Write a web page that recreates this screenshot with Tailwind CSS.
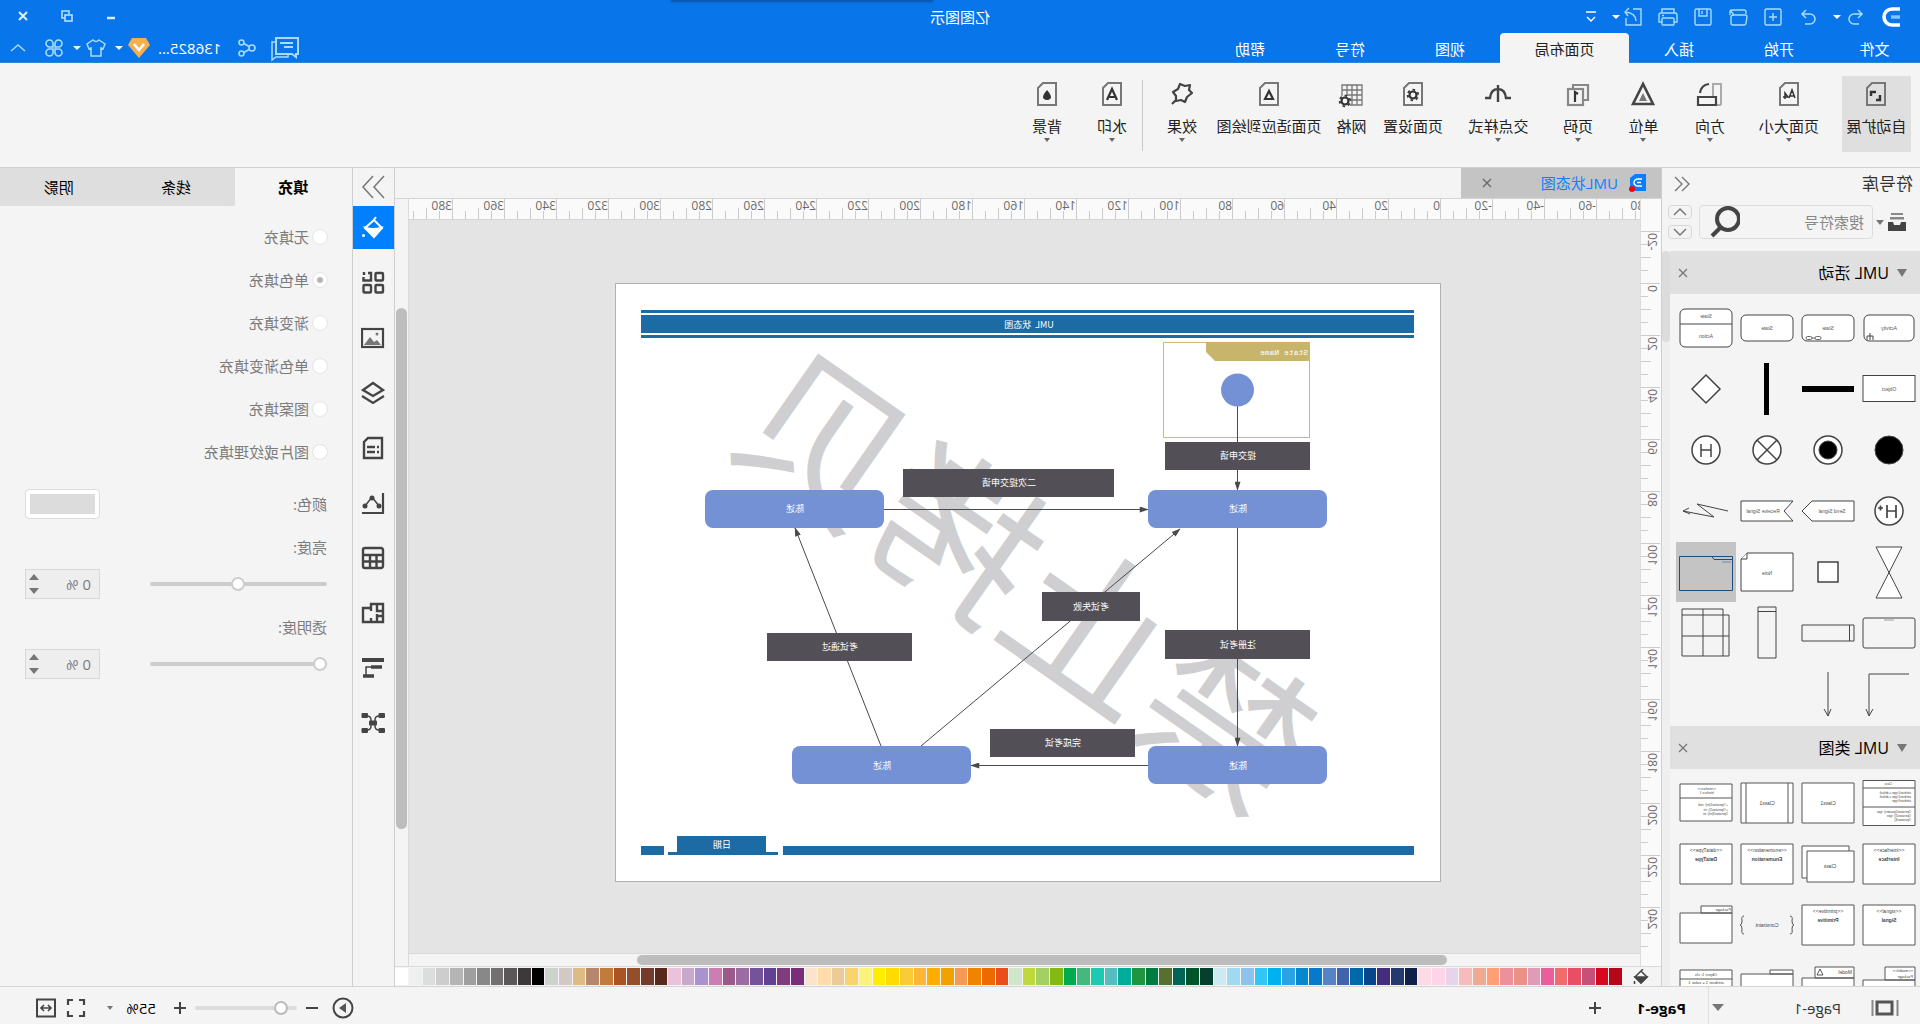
<!DOCTYPE html>
<html lang="zh-CN">
<head>
<meta charset="utf-8">
<title>亿图图示</title>
<script src="https://cdn.jsdelivr.net/npm/@tailwindcss/browser@4"></script>
</head>
<body class="overflow-hidden bg-[#f4f4f4]">
<div class="flex h-screen flex-col -scale-x-100 overflow-hidden bg-[#f4f4f4] font-['Open_Sans','Noto_Sans_CJK_SC',sans-serif] text-[15px] leading-5 text-[#333]">

<!-- Title bar -->
<header class="relative bg-[#0876ea] text-white">
  <div class="absolute top-0 left-[51.4%] h-[2px] w-[262px] bg-[#0a56a8]/80 shadow-[0_0_3px_#0a56a8]"></div>
  <div class="grid h-[33px] grid-cols-[1fr_auto_1fr] items-center">
    <div class="flex items-center pl-4 text-[#a8dcff]">
      <svg class="h-6 w-[26px]" viewBox="0 0 26 24" fill="none"><path d="M4 3.800h9q-8 2-8 8.200t8 8.200h9M22 3.800H12M12 20.200h9" stroke="none"/><path d="M4 4h8a8 8 0 0 1 0 16H4" stroke="#fff" stroke-width="3.600"/><path d="M4 12h9" stroke="#7cc8ff" stroke-width="3.400"/></svg>
      <button aria-label="撤销" class="ml-3 h-5 w-5"><svg viewBox="0 0 20 20" fill="none" stroke="currentColor" stroke-width="1.500"><path d="M8 3 4 7l4 4M4 7h8a5 5 0 0 1 0 10H7"/></svg></button>
      <button aria-label="撤销列表" class="ml-1 w-[10px]"><svg class="h-[10px]" viewBox="0 0 10 10" fill="#fff"><path d="M1 3h8L5 7z"/></svg></button>
      <div class="ml-[14px] flex gap-[15px]">
        <button aria-label="恢复" class="h-5 w-5"><svg viewBox="0 0 20 20" fill="none" stroke="currentColor" stroke-width="1.500"><path d="m12 3 4 4-4 4M16 7H8a5 5 0 0 0 0 10h5"/></svg></button>
        <button aria-label="新建" class="h-5 w-5"><svg viewBox="0 0 20 20" fill="none" stroke="currentColor" stroke-width="1.400"><rect x="2" y="2" width="16" height="16" rx="1.500"/><path d="M10 6v8M6 10h8"/></svg></button>
        <button aria-label="打开" class="h-5 w-5"><svg viewBox="0 0 20 20" fill="none" stroke="currentColor" stroke-width="1.400"><path d="M2 7V5q0-2 2-2h12q2 0 2 2v3M4 18q-2 0-2-2l-1-6q0-2 2-2h11l4-5M14 8q3 0 3 2v6q0 2-2 2H4" /></svg></button>
        <button aria-label="保存" class="h-5 w-5"><svg viewBox="0 0 20 20" fill="none" stroke="currentColor" stroke-width="1.400"><rect x="2" y="2" width="16" height="16" rx="1.500"/><path d="M6 2v7h8V2M11 4v3"/></svg></button>
        <button aria-label="打印" class="h-5 w-5"><svg viewBox="0 0 20 20" fill="none" stroke="currentColor" stroke-width="1.400"><path d="M4 6V2h12v4M4 15H1V8q0-2 2-2h14q2 0 2 2v7h-3"/><rect x="4" y="11" width="12" height="7" rx="1"/><path d="M14 8.500h2"/></svg></button>
        <button aria-label="导出" class="h-5 w-5"><svg viewBox="0 0 20 20" fill="none" stroke="currentColor" stroke-width="1.400"><path d="M10 2H2v16h15v-7M7 14q0-8 11-9M14 1l4 4-3 4"/></svg></button>
      </div>
      <button aria-label="导出列表" class="ml-[2px] w-[10px]"><svg class="h-[10px]" viewBox="0 0 10 10" fill="#fff"><path d="M1 3h8L5 7z"/></svg></button>
      <button aria-label="更多" class="ml-[10px] h-5 w-5"><svg viewBox="0 0 20 20" fill="none" stroke="#fff" stroke-width="1.400"><path d="M5 5h10M6 10l4 4 4-4"/></svg></button>
    </div>
    <h1>亿图图示</h1>
    <div class="flex justify-end gap-6 pr-[13px]">
      <button aria-label="最小化" class="h-5 w-5"><svg viewBox="0 0 20 20" stroke="#d6eeff" stroke-width="2.500"><path d="M6 11h8"/></svg></button>
      <button aria-label="还原" class="h-5 w-5"><svg viewBox="0 0 20 20" fill="none" stroke="#b4e0ff" stroke-width="1.600"><rect x="5" y="8" width="7" height="6"/><path d="M8 7V4h7v7h-3"/></svg></button>
      <button aria-label="关闭" class="h-5 w-5"><svg viewBox="0 0 20 20" stroke="#d6eeff" stroke-width="2.200"><path d="m6 5 8 8M14 5l-8 8"/></svg></button>
    </div>
  </div>
  <div class="flex h-[30px] items-stretch border-b border-[#2a86d8]">
    <nav class="flex items-stretch [&>a]:pt-[2px]">
      <a href="#" class="flex w-[91px] items-center justify-center">文件</a>
      <a href="#" class="flex w-[100px] items-center justify-center">开始</a>
      <a href="#" class="flex w-[100px] items-center justify-center">插入</a>
      <a href="#" class="-mb-px flex w-[129px] items-center justify-center rounded-t-sm bg-[#f4f4f4] text-[#222]">页面布局</a>
      <a href="#" class="flex w-[100px] items-center justify-center">视图</a>
      <a href="#" class="flex w-[100px] items-center justify-center">符号</a>
      <a href="#" class="flex w-[100px] items-center justify-center">帮助</a>
    </nav>
    <div class="ml-auto flex items-center pr-2 text-[#a8dcff]">
      <button aria-label="消息" class="h-7 w-7"><svg viewBox="0 0 28 28" fill="none" stroke="currentColor" stroke-width="2"><path d="M1 4h22v16H7l-4 3v-3H1z"/><path d="M6 9h13M6 13h9"/><path d="M23 8h4v18l-4-3H11v-3" stroke-width="1.500"/></svg></button>
      <button aria-label="分享" class="ml-[14px] h-5 w-5"><svg viewBox="0 0 20 20" fill="none" stroke="currentColor" stroke-width="1.600"><circle cx="5" cy="10" r="3"/><circle cx="15.500" cy="4.500" r="2.500"/><circle cx="15.500" cy="15.500" r="2.500"/><path d="m8 8.500 5-3M8 11.500l5 3"/></svg></button>
      <span class="ml-4 text-[15px] text-white">136825...</span>
      <svg class="ml-2 h-[22px] w-[22px]" viewBox="0 0 22 22"><path d="M4 1h14l4 7-11 13L0 8z" fill="#f5b04d"/><path d="m6 7 5 6 5-6" fill="none" stroke="#fff" stroke-width="2.600"/></svg>
      <svg class="ml-1 h-[10px] w-[10px]" viewBox="0 0 10 10" fill="#fff"><path d="M1 3h8L5 7z"/></svg>
      <button aria-label="主题" class="ml-2 h-5 w-5"><svg viewBox="0 0 20 20" fill="none" stroke="currentColor" stroke-width="1.500"><path d="M7 2 1 6l2 5 2-1v8h10v-8l2 1 2-5-6-4q-3 3-6 0z"/></svg></button>
      <svg class="ml-1 h-[10px] w-[10px]" viewBox="0 0 10 10" fill="#fff"><path d="M1 3h8L5 7z"/></svg>
      <button aria-label="应用" class="ml-2 h-5 w-5"><svg viewBox="0 0 20 20" fill="none" stroke="currentColor" stroke-width="1.600"><path d="M9 9H5.500A3.500 3.500 0 1 1 9 5.500zM11 9h3.500A3.500 3.500 0 1 0 11 5.500zM9 11H5.500A3.500 3.500 0 1 0 9 14.500zM11 11h3.500a3.500 3.500 0 1 1-3.500 3.500z"/></svg></button>
      <button aria-label="折叠功能区" class="ml-4 h-5 w-5"><svg viewBox="0 0 20 20" fill="none" stroke="currentColor" stroke-width="1.500"><path d="m3 13 7-6 7 6"/></svg></button>
    </div>
  </div>
</header>

<!-- Ribbon -->
<section class="flex h-[105px] items-start border-b border-[#d0d0d0] pt-[13px] text-[#222] [&>button]:gap-2">
  <button class="ml-[9px] flex h-[76px] w-[69px] flex-col items-center bg-[#dfdfdf] pt-1"><svg class="h-7 w-7" viewBox="0 0 28 28" fill="none" stroke="#777" stroke-width="2"><path d="M5 3h13l5 5v17H5z"/><path d="M10 15v5h4M14 12h5v4" stroke="#333" stroke-width="2.400"/></svg><span class="whitespace-nowrap">自动扩展</span></button>
  <button class="ml-2 flex h-[76px] w-[90px] flex-col items-center pt-1"><svg class="h-7 w-7" viewBox="0 0 28 28" fill="none" stroke="#777" stroke-width="2"><path d="M5 3h13l5 5v17H5z"/><path d="m8 18 3-8 3 8M9 16h4M18 19v-6l-3 4h5" stroke="#333" stroke-width="1.500"/></svg><span class="whitespace-nowrap">页面大小</span><svg class="-mt-2 h-2 w-2" viewBox="0 0 8 8" fill="#666"><path d="M1 2h6L4 6z"/></svg></button>
  <button class="flex h-[76px] w-[68px] flex-col items-center pt-1"><svg class="h-7 w-7" viewBox="0 0 28 28" fill="none" stroke="#aaa" stroke-width="2"><path d="M3 25V4h8v13"/><path d="M3 25h4"/><path d="M8 17h18v8H8zM15 4q8 1 9 9" stroke="#444" stroke-width="2.200"/></svg><span class="whitespace-nowrap">方向</span><svg class="-mt-2 h-2 w-2" viewBox="0 0 8 8" fill="#666"><path d="M1 2h6L4 6z"/></svg></button>
  <button class="flex h-[76px] w-[65px] flex-col items-center pt-1"><svg class="h-7 w-7" viewBox="0 0 28 28"><path d="M14 4 24 24H4z" fill="none" stroke="#444" stroke-width="2.600"/><path d="m14 13 4 8h-8z" fill="#777"/></svg><span class="whitespace-nowrap">单位</span><svg class="-mt-2 h-2 w-2" viewBox="0 0 8 8" fill="#666"><path d="M1 2h6L4 6z"/></svg></button>
  <button class="flex h-[76px] w-[66px] flex-col items-center pt-1"><svg class="h-7 w-7" viewBox="0 0 28 28" fill="none" stroke="#888" stroke-width="2.200"><path d="M8 19H4V9q0-1 1-1h1V5h13v3" stroke="none"/><path d="M8 20H4V5h15v4"/><rect x="9" y="9" width="15" height="16"/><path d="m14 14 3-2v10" stroke="#333"/></svg><span class="whitespace-nowrap">页码</span><svg class="-mt-2 h-2 w-2" viewBox="0 0 8 8" fill="#666"><path d="M1 2h6L4 6z"/></svg></button>
  <button class="flex h-[76px] w-[93px] flex-col items-center pt-1"><svg class="h-7 w-7" viewBox="0 0 28 28" fill="none" stroke="#444" stroke-width="2.400"><path d="M1 18h5q1-9 8-9t8 9h5M14 5v17"/></svg><span class="whitespace-nowrap">交点样式</span><svg class="-mt-2 h-2 w-2" viewBox="0 0 8 8" fill="#666"><path d="M1 2h6L4 6z"/></svg></button>
  <button class="flex h-[76px] w-[78px] flex-col items-center pt-1"><svg class="h-7 w-7" viewBox="0 0 28 28" fill="none" stroke="#777" stroke-width="2"><path d="M5 3h13l5 5v17H5z"/><circle cx="14" cy="15" r="3.500" stroke="#333" stroke-width="2.200"/><circle cx="14" cy="15" r="5.300" stroke="#333" stroke-width="1.800" stroke-dasharray="2.600 2.950"/></svg><span class="whitespace-nowrap">页面设置</span></button>
  <button class="flex h-[76px] w-[45px] flex-col items-center pt-1"><svg class="h-7 w-7" viewBox="0 0 28 28" fill="none" stroke="#777" stroke-width="1.300"><path d="M15 25H3V5h20v11M3 10h20M3 15h16M3 20h12M8 5v20M13 5v20M18 5v11"/><circle cx="20" cy="21" r="3.500" stroke="#333" stroke-width="2.200"/><circle cx="20" cy="21" r="5.300" stroke="#333" stroke-width="1.800" stroke-dasharray="2.600 2.950"/></svg><span class="whitespace-nowrap">网格</span></button>
  <button class="flex h-[76px] w-[120px] flex-col items-center pt-1"><svg class="h-7 w-7" viewBox="0 0 28 28" fill="none" stroke="#777" stroke-width="2"><path d="M5 3h13l5 5v17H5z"/><path d="m14 11 4 8h-8z" stroke="#333" stroke-width="2.200"/></svg><span class="whitespace-nowrap">页面适应到绘图</span></button>
  <button class="flex h-[76px] w-[54px] flex-col items-center pt-1"><svg class="h-7 w-7" viewBox="0 0 28 28" fill="none" stroke="#444" stroke-width="2.200" stroke-linejoin="round"><path d="m6 5 5 1 5-2 2 5 5 3-3 4v5l-5-1-4 2-2-5-5-4 3-3zM20 20l4 4"/></svg><span class="whitespace-nowrap">效果</span><svg class="-mt-2 h-2 w-2" viewBox="0 0 8 8" fill="#666"><path d="M1 2h6L4 6z"/></svg></button>
  <div class="mt-1 ml-3 h-[71px] w-px bg-[#c8c8c8]"></div>
  <button class="flex h-[76px] w-[60px] flex-col items-center pt-1"><svg class="h-7 w-7" viewBox="0 0 28 28" fill="none" stroke="#777" stroke-width="2"><path d="M5 3h13l5 5v17H5z"/><path d="m9 20 5-11 5 11M11 17h6" stroke="#333" stroke-width="2.200"/></svg><span class="whitespace-nowrap">水印</span><svg class="-mt-2 h-2 w-2" viewBox="0 0 8 8" fill="#666"><path d="M1 2h6L4 6z"/></svg></button>
  <button class="flex h-[76px] w-[70px] flex-col items-center pt-1"><svg class="h-7 w-7" viewBox="0 0 28 28" fill="none" stroke="#777" stroke-width="2"><path d="M5 3h13l5 5v17H5z"/><path d="M14 10q8 9 0 10-8-1 0-10z" fill="#333" stroke="none"/></svg><span class="whitespace-nowrap">背景</span><svg class="-mt-2 h-2 w-2" viewBox="0 0 8 8" fill="#666"><path d="M1 2h6L4 6z"/></svg></button>
</section>

<main class="flex min-h-0 flex-1">

<!-- Symbol library -->
<aside class="flex w-[259px] shrink-0 flex-col border-r border-[#cfcfcf]">
  <div class="flex h-8 shrink-0 items-center justify-between pr-3 pl-[7px]">
    <h2 class="text-[17px]">符号库</h2>
    <button aria-label="收起" class="h-4 w-4"><svg viewBox="0 0 16 16" fill="none" stroke="#777" stroke-width="1.400"><path d="M8 1 1 8l7 7M15 1 8 8l7 7"/></svg></button>
  </div>
  <div class="mt-[5px] flex h-[34px] shrink-0 items-center pl-[14px]">
    <button aria-label="符号库菜单" class="flex w-[33px] items-center gap-1"><svg class="h-5 w-[18px]" viewBox="0 0 18 20" fill="#444"><path d="M3 1h12v2H3zM2 5h14v2.500H2z" fill="#888"/><path d="M0 10h5l1 3h6l1-3h5v9H0z"/></svg><svg class="h-2 w-2" viewBox="0 0 8 8" fill="#777"><path d="M0 2h8L4 7z"/></svg></button>
    <div class="flex h-full w-[174px] items-center rounded-sm border border-[#dcdcdc]">
      <input aria-label="搜索符号" placeholder="搜索符号" class="w-[124px] bg-transparent pl-2 text-[15px] placeholder:text-[#888]">
      <button aria-label="搜索" class="ml-2 h-8 w-8"><svg viewBox="0 0 32 32" fill="none" stroke="#444"><circle cx="12" cy="13" r="11" stroke-width="4"/><path d="m19 21 9 9" stroke-width="4"/></svg></button>
    </div>
    <div class="ml-[7px] flex w-6 flex-col gap-[6px]">
      <button aria-label="上一个" class="flex h-[14px] items-center justify-center rounded-sm border border-[#d8d8d8]"><svg class="h-3 w-4" viewBox="0 0 16 12" fill="none" stroke="#777" stroke-width="1.500"><path d="m2 9 6-6 6 6"/></svg></button>
      <button aria-label="下一个" class="flex h-[14px] items-center justify-center rounded-sm border border-[#d8d8d8]"><svg class="h-3 w-4" viewBox="0 0 16 12" fill="none" stroke="#777" stroke-width="1.500"><path d="m2 3 6 6 6-6"/></svg></button>
    </div>
  </div>
  <div class="mt-3 flex min-h-0 flex-1">
    <div class="w-[250px] overflow-hidden">
      <h3 class="flex h-[43px] items-center bg-[#e0e0e0] pr-[7px] pl-[13px] text-[16px] text-black"><svg class="mr-2 h-[10px] w-[10px]" viewBox="0 0 10 10" fill="#777"><path d="M0 1h10L5 9z"/></svg>UML 活动<button aria-label="关闭" class="ml-auto h-3 w-3"><svg viewBox="0 0 12 12" stroke="#777" stroke-width="1.300"><path d="m2 2 8 8M10 2l-8 8"/></svg></button></h3>
      <div class="grid grid-cols-[repeat(4,61px)] auto-rows-[61px] px-px pt-1 pb-px [&>svg]:h-[60px] [&>svg]:w-[60px] fill-white stroke-[#444] font-['Liberation_Sans',sans-serif] text-[5px] [&_text]:fill-[#555] [&_text]:stroke-none">
        <svg viewBox="0 0 60 60" text-anchor="middle"><rect x="5" y="17" width="50" height="26" rx="5"/><text x="30" y="32">Activity</text><path d="M46 42v-4h6v4M49 42v-7" fill="none"/></svg>
        <svg viewBox="0 0 60 60" text-anchor="middle"><rect x="4" y="17" width="52" height="26" rx="5"/><text x="30" y="32">State</text><g fill="none" stroke-width=".8"><rect x="37" y="38.500" width="6" height="3" rx="1.500"/><rect x="46" y="38.500" width="6" height="3" rx="1.500"/><path d="M43 40h3"/></g></svg>
        <svg viewBox="0 0 60 60" text-anchor="middle"><rect x="4" y="17" width="52" height="26" rx="5"/><text x="30" y="32">State</text></svg>
        <svg viewBox="0 0 60 60" text-anchor="middle"><rect x="4" y="11" width="52" height="38" rx="5"/><path d="M4 26h52"/><text x="30" y="20">State</text><text x="30" y="40">Action</text></svg>

        <svg viewBox="0 0 60 60" text-anchor="middle"><rect x="4" y="16.500" width="52" height="26"/><text x="30" y="32">Object</text></svg>
        <svg viewBox="0 0 60 60" class="fill-black stroke-none"><path d="M4 27h52v6H4z"/></svg>
        <svg viewBox="0 0 60 60" class="fill-black stroke-none"><path d="M28 4h5v52h-5z"/></svg>
        <svg viewBox="0 0 60 60"><path d="m30 16 14 14-14 14-14-14z" stroke-width="1.500"/></svg>

        <svg viewBox="0 0 60 60"><circle cx="30" cy="30" r="14" class="fill-black"/></svg>
        <svg viewBox="0 0 60 60"><circle cx="30" cy="30" r="14" stroke-width="1.500"/><circle cx="30" cy="30" r="9" class="fill-black"/></svg>
        <svg viewBox="0 0 60 60"><circle cx="30" cy="30" r="14" stroke-width="1.500"/><path d="m20 20 20 20M40 20 20 40" stroke-width="1.500"/></svg>
        <svg viewBox="0 0 60 60"><circle cx="30" cy="30" r="14" stroke-width="1.500"/><path d="M25 24v13M35 24v13M25 30h10" stroke-width="1.500"/></svg>

        <svg viewBox="0 0 60 60"><circle cx="30" cy="30" r="14" stroke-width="1.500"/><path d="M23 24v13M32 24v13M23 30h9M36 27h5M38.500 24.500v5" stroke-width="1.700"/></svg>
        <svg viewBox="0 0 60 60" text-anchor="middle"><path d="M4 20h42l10 10-10 10H4z"/><text x="26" y="32">Send Signal</text></svg>
        <svg viewBox="0 0 60 60" text-anchor="middle"><path d="M4 20h52v20H4l9-10z"/><text x="34" y="32">Receive Signal</text></svg>
        <svg viewBox="0 0 60 60" class="fill-none"><path d="m8 30 31-7-17 13 31-6M47 27l6 3-7 3"/></svg>

        <svg viewBox="0 0 60 60"><path d="M17 5h26L17 56h26z"/></svg>
        <svg viewBox="0 0 60 60"><path d="M20 20h20v20H20z" stroke-width="1.500"/></svg>
        <svg viewBox="0 0 60 60" text-anchor="middle"><path d="M4 11h46l6 6v32H4z"/><path d="M50 11v6h6"/><text x="30" y="33">Note</text></svg>
        <svg viewBox="0 0 60 60" class="bg-[#c4c4c4] fill-none stroke-[#1d4f7a]"><path d="M3.500 14.500h53v34h-53zM3.500 17.500H22l2-3"/><path d="M5 20h9" stroke-width=".5"/></svg>

        <svg viewBox="0 0 60 60" class="fill-none"><rect x="4" y="15" width="52" height="30" rx="2"/><path d="M25 17h10" stroke-width=".5"/></svg>
        <svg viewBox="0 0 60 60" class="fill-none"><path d="M4 22h52v16H4zM8.500 22v16"/></svg>
        <svg viewBox="0 0 60 60" class="fill-none"><path d="M21 4h18v51H21zM21 8.500h18"/></svg>
        <svg viewBox="0 0 60 60" class="fill-none"><path d="M7 12h6V6h41v47H7zM7 33h47M13 12h41M13 12v41M33 6v47"/></svg>

        <svg viewBox="0 0 60 60" class="fill-none"><path d="M10 10h40v41M46 45l4 7 3-7"/></svg>
        <svg viewBox="0 0 60 60" class="fill-none"><path d="M30 8v44M27 45l3 7 4-7"/></svg>
      </div>
      <h3 class="flex h-[43px] items-center bg-[#e0e0e0] pr-[7px] pl-[13px] text-[16px] text-black"><svg class="mr-2 h-[10px] w-[10px]" viewBox="0 0 10 10" fill="#777"><path d="M0 1h10L5 9z"/></svg>UML 类图<button aria-label="关闭" class="ml-auto h-3 w-3"><svg viewBox="0 0 12 12" stroke="#777" stroke-width="1.300"><path d="m2 2 8 8M10 2l-8 8"/></svg></button></h3>
      <div class="grid grid-cols-[repeat(4,61px)] auto-rows-[61px] px-px pt-1 [&>svg]:h-[60px] [&>svg]:w-[60px] fill-white stroke-[#555] font-['Liberation_Sans',sans-serif] text-[5px] [&_text]:fill-[#444] [&_text]:stroke-none">
        <svg viewBox="0 0 60 60"><path d="M4 7.500h52v45H4zM4 15h52M4 34h52"/><g class="text-[3px]"><text x="27" y="12">Class</text><text x="8" y="21">attribute1:type = default</text><text x="8" y="25">attribute2:type = default</text><text x="8" y="29">attribute3:type</text><text x="8" y="40">Operation1(params): type</text><text x="8" y="44">Operation2(): type</text><text x="8" y="48">Operation3()</text></g></svg>
        <svg viewBox="0 0 60 60" text-anchor="middle"><path d="M4 10h52v40H4z"/><text x="30" y="32">Class1</text></svg>
        <svg viewBox="0 0 60 60" text-anchor="middle"><path d="M4 10h52v40H4zM9 10v40M51 10v40"/><text x="30" y="32">Class1</text></svg>
        <svg viewBox="0 0 60 60"><path d="M4 11h52v37H4zM4 25h52"/><g class="text-[3px]"><text x="20" y="17">&lt;&lt;interface&gt;&gt;</text><text x="22" y="21">Interface 1</text><text x="8" y="33">+ Operation1(int): void</text><text x="8" y="38">+ Operation2(): int</text><text x="8" y="42">Operation3(int): int</text></g></svg>

        <svg viewBox="0 0 60 60" text-anchor="middle"><path d="M4 10h52v40H4z"/><text x="30" y="18">&lt;&lt;interface&gt;&gt;</text><text x="30" y="27" font-weight="700">Interface</text></svg>
        <svg viewBox="0 0 60 60" text-anchor="middle"><path d="M9 12h47v32H9z"/><path d="M4 17h47v31H4z"/><text x="28" y="34">Class</text></svg>
        <svg viewBox="0 0 60 60" text-anchor="middle"><path d="M4 10h52v40H4z"/><text x="30" y="18">&lt;&lt;enumeration&gt;&gt;</text><text x="30" y="27" font-weight="700">Enumeration</text></svg>
        <svg viewBox="0 0 60 60" text-anchor="middle"><path d="M4 10h52v40H4z"/><text x="30" y="18">&lt;&lt;dataType&gt;&gt;</text><text x="30" y="27" font-weight="700">DataType</text></svg>

        <svg viewBox="0 0 60 60" text-anchor="middle"><path d="M4 10h52v40H4z"/><text x="30" y="18">&lt;&lt;signal&gt;&gt;</text><text x="30" y="27" font-weight="700">Signal</text></svg>
        <svg viewBox="0 0 60 60" text-anchor="middle"><path d="M4 10h52v40H4z"/><text x="30" y="18">&lt;&lt;primitive&gt;&gt;</text><text x="30" y="27" font-weight="700">Primitive</text></svg>
        <svg viewBox="0 0 60 60" text-anchor="middle" class="fill-none"><path d="M7 21q-3 0-2 5 0 4-2 4 2 0 2 4-1 5 2 5M53 21q3 0 2 5 0 4 2 4-2 0-2 4 1 5-2 5"/><text x="30" y="32">Constraint</text></svg>
        <svg viewBox="0 0 60 60"><path d="M4 11h31v7H4zM4 18h52v30H4z"/><text x="5" y="16" class="text-[4px]">Package</text></svg>

        <svg viewBox="0 0 60 60"><path d="M4 11h30v13H4zM4 24h52v30H4z"/><g class="text-[4px]"><text x="6" y="16">&lt;&lt;model&gt;&gt;</text><text x="6" y="22">Package</text></g></svg>
        <svg viewBox="0 0 60 60"><path d="M4 11h39v11H4zM4 22h52v30H4zM38 13l3 6h-6z"/><text x="6" y="18">Model</text></svg>
        <svg viewBox="0 0 60 60"><path d="M4 14h23v4H4zM4 18h52v34H4z"/></svg>
        <svg viewBox="0 0 60 60" text-anchor="middle"><path d="M4 14h52v40H4zM4 23h52"/><g class="text-[4px]"><text x="30" y="20">Object 1: cls</text><text x="30" y="28">attribute 1 = value 1</text></g></svg>
      </div>
    </div>
    <div class="flex-1 bg-[#efefef]"><div class="h-[91px] rounded-sm bg-[#dcdcdc]"></div></div>
  </div>
</aside>

<!-- Drawing area -->
<section class="flex min-w-0 flex-1 flex-col">
  <div class="flex h-[31px] shrink-0 border-b border-[#d4d4d4]">
    <div class="flex w-[200px] items-center bg-[#c4c4c4] pl-[15px] text-[#0f7fff]">
      <svg class="h-[18px] w-[18px]" viewBox="0 0 18 18"><path d="M0 0h11l5 4v13H0z" fill="#0b7dff"/><path d="M4 5h4a4 3.500 0 0 1 0 7H4M5 8.500h4" fill="none" stroke="#fff" stroke-width="1.500"/><circle cx="14" cy="15" r="3" fill="#f00"/></svg>
      <span class="ml-[10px]">UML状态图</span>
      <button aria-label="关闭页签" class="mr-5 ml-auto h-3 w-3"><svg viewBox="0 0 12 12" stroke="#666" stroke-width="1.300"><path d="m2 2 8 8M10 2l-8 8"/></svg></button>
    </div>
  </div>
  <div class="flex min-h-0 flex-1">
    <div class="w-[21px] shrink-0 overflow-hidden border-r border-[#dcdcdc] bg-[#fafafa]"><svg id="vruler" class="h-full w-[21px]"></svg></div>
    <div class="flex min-w-0 flex-1 flex-col">
      <div class="h-5 shrink-0 overflow-hidden bg-[#fafafa]"><svg id="hruler" class="h-5 w-full"></svg></div>
      <div class="min-h-0 flex-1 overflow-hidden border-t border-[#d6d6d6] bg-[#e4e4e4]">
        <svg class="mt-16 ml-[200px] h-[597px] w-[824px] bg-white outline outline-[#b0b0b0] font-['Noto_Sans_CJK_SC',sans-serif] text-[9px]" viewBox="0 0 824 597" text-anchor="middle">
          <defs><marker id="arrow" viewBox="0 0 12 8" refX="11" refY="4" markerWidth="11" markerHeight="6" orient="auto"><path d="M0 0l12 4-12 4z" fill="#4a4a4c"/></marker></defs>
          <text transform="translate(416 298) rotate(-35)" y="60" class="text-[164px]" fill="#cfcfd1">禁止拷贝</text>
          <g fill="#1c6ba5"><path d="M26 26h773v3H26zM26 31h773v18H26zM26 51h773v3H26zM26 562h631v9H26zM776 562h23v9h-23zM674 552h89v16h9v3H662v-3h12z"/></g>
          <path d="M130.500 58.500h146v95h-146z" fill="none" stroke="#c2bd76"/>
          <path d="M130 58h104v10l-9 9h-95z" fill="#c7b56b"/>
          <g stroke="#4a4a4c" fill="none">
            <path d="M202.500 106v60"/><path d="M202.500 180v26" marker-end="url(#arrow)"/>
            <path d="M202.500 244v218" marker-end="url(#arrow)"/>
            <path d="M556 225.500H292" marker-end="url(#arrow)"/>
            <path d="M292 481.500h177" marker-end="url(#arrow)"/>
            <path d="M519 462 260 245" marker-end="url(#arrow)"/>
            <path d="m559 462 86-218" marker-end="url(#arrow)"/>
          </g>
          <circle cx="202.500" cy="106" r="16.500" fill="#7491d5"/>
          <g fill="#7491d5"><rect x="113" y="206" width="179" height="38" rx="8"/><rect x="556" y="206" width="179" height="38" rx="8"/><rect x="113" y="462" width="179" height="38" rx="8"/><rect x="469" y="462" width="179" height="38" rx="8"/></g>
          <path d="M130 158h145v28H130zM326 185h211v28H326zM130 346h145v29H130zM305 445h145v28H305zM300 308h98v29h-98zM528 349h145v28H528z" fill="#534f56"/>
          <g fill="#fff">
            <text x="411" y="44" xml:space="preserve">UML  状态图</text>
            <text x="132" y="71" text-anchor="start" class="font-['Liberation_Mono',monospace] text-[8px]">State Name</text>
            <text x="202" y="175">提交申请</text><text x="431" y="202">二次提交申请</text><text x="202" y="364">注册考试</text><text x="377" y="462">完成考试</text><text x="349" y="326">考试失败</text><text x="600" y="366">考试通过</text>
            <text x="202" y="228">陈述</text><text x="645" y="228">陈述</text><text x="202" y="485">陈述</text><text x="558" y="485">陈述</text><text x="718" y="564">日期</text>
          </g>
        </svg>
      </div>
      <div class="h-[13px] shrink-0 border-t border-[#dadada] py-px"><div class="ml-[15.7%] h-[10px] w-[65.8%] rounded-full bg-[#bdbdbd]"></div></div>
    </div>
    <div class="w-[14px] shrink-0 border-l border-[#dadada] px-px pt-[109px]"><div class="h-[521px] w-[11px] rounded-full bg-[#bdbdbd]"></div></div>
  </div>
  <div class="flex h-5 shrink-0 items-center border-t border-[#dadada] pl-3">
    <svg class="h-4 w-4" viewBox="0 0 16 16" fill="none" stroke="#444" stroke-width="1.500"><path d="m8 2 6 6-6 6-6-6zM9 3 6 0"/><path d="M2 8h12l-6 6z" fill="#444"/><path d="M14.500 12v3"/></svg>
    <div id="palette" class="ml-[11px] flex h-[17px] flex-1 gap-px"></div>
  </div>
</section>

<!-- Format tool strip -->
<nav class="flex w-[43px] shrink-0 flex-col border-x border-[#cfcfcf] [&_svg]:h-6 [&_svg]:w-6">
  <button aria-label="收起" class="flex h-[38px] items-center justify-center"><svg viewBox="0 0 24 24" fill="none" stroke="#777" stroke-width="1.500"><path d="m1 1 10 11L1 23M12 1l10 11-10 11"/></svg></button>
  <button aria-label="填充" class="flex h-[43px] items-center justify-center bg-[#0080ff]"><svg viewBox="0 0 24 24" fill="none" stroke="#fff" stroke-width="2"><path d="m11 4 9 8-9 9-8-9zM12 5 9 1"/><path d="M4 12q8 2 15 0l-8 8z" fill="#fff"/><circle cx="21.500" cy="19.500" r="1.500" fill="#fff" stroke="none"/></svg></button>
  <div class="flex flex-col pt-[6px] [&>button]:flex [&>button]:h-[55px] [&>button]:items-center [&>button]:justify-center">
    <button aria-label="符号"><svg viewBox="0 0 24 24" fill="none" stroke="#444" stroke-width="2.400"><rect x="2" y="2" width="7.500" height="7.500" rx="1"/><rect x="2" y="14" width="7.500" height="7.500" rx="1"/><rect x="14" y="14" width="7.500" height="7.500" rx="1"/><path d="M17 2h-3v7.500h7.500V6M21 1v3"/></svg></button>
    <button aria-label="图片"><svg viewBox="0 0 24 24" fill="none" stroke="#444" stroke-width="2.200"><rect x="2" y="3" width="21" height="18"/><path d="m4 19 4-5 3 2 4-5 6 8z" fill="#777" stroke="none"/><circle cx="8" cy="8" r="1.500" fill="#777" stroke="none"/></svg></button>
    <button aria-label="图层"><svg viewBox="0 0 24 24" fill="none" stroke="#444" stroke-width="2.300"><path d="m12 2 10 7-10 6L2 9zM1 15l11 7 11-7"/></svg></button>
    <button aria-label="备注"><svg viewBox="0 0 24 24" fill="none" stroke="#444" stroke-width="2.400"><path d="M3 2h14l4 4v16H3zM6 11h2M10 11h8M6 16h2M10 16h8"/></svg></button>
    <button aria-label="图表"><svg viewBox="0 0 24 24" fill="none" stroke="#444" stroke-width="2.200"><path d="M2 2v20h21"/><path d="m6 15 7-9 7 9" stroke-width="1.500"/><g fill="#444" stroke="none"><circle cx="6" cy="15" r="2.500"/><circle cx="13" cy="7" r="2.500"/><circle cx="20" cy="15" r="2.500"/></g></svg></button>
    <button aria-label="表格"><svg viewBox="0 0 24 24" fill="none" stroke="#444" stroke-width="2.400"><rect x="2" y="2" width="20" height="20" rx="2"/><path d="M2 9h20M2 15.500h20M8.500 9v13M15 9v13"/></svg></button>
    <button aria-label="平面图"><svg viewBox="0 0 24 24" fill="none" stroke="#444" stroke-width="2.400"><path d="M2 3h12v4h8v14H2zM8 3v7H2M14 7v3M2 15h6M8 13v8h6v-4"/></svg></button>
    <button aria-label="甘特图"><svg viewBox="0 0 24 24" fill="none" stroke="#444" stroke-width="4"><path d="M1 4h22"/><path d="M3 11h11M11 20h11" stroke-width="3.400"/><path d="M14 11h5v8" stroke-width="1.500"/></svg></button>
    <button aria-label="思维导图"><svg viewBox="0 0 24 24" fill="#444"><rect x="0" y="2" width="6.500" height="5" rx="1"/><rect x="17" y="2" width="6.500" height="5" rx="1"/><rect x="0" y="17" width="6.500" height="5" rx="1"/><rect x="17" y="17" width="6.500" height="5" rx="1"/><rect x="8" y="9.500" width="8" height="5" rx="1"/><path d="M6 5q4 0 4 4v6q0 4-4 4M18 5q-4 0-4 4v6q0 4 4 4" fill="none" stroke="#444" stroke-width="1.500"/></svg></button>
  </div>
</nav>

<!-- Fill panel -->
<aside class="w-[352px] shrink-0 text-[#7c7c7c]">
  <div class="grid h-[38px] grid-cols-3 bg-[#dedede] text-black">
    <button class="bg-[#f4f4f4] font-bold">填充</button>
    <button class="rounded-bl-md bg-[#dedede]">线条</button>
    <button>阴影</button>
  </div>
  <fieldset class="mt-[9px] flex flex-col pl-[25px]">
    <label class="flex h-[43px] items-center gap-1"><input type="radio" name="fill" class="h-[14px] w-[14px] appearance-none rounded-full border-2 border-white bg-white outline outline-[#e6e6e6] checked:border-4 checked:bg-[#b4b4b4]">无填充</label>
    <label class="flex h-[43px] items-center gap-1"><input type="radio" name="fill" checked class="h-[14px] w-[14px] appearance-none rounded-full border-2 border-white bg-white outline outline-[#e6e6e6] checked:border-4 checked:bg-[#b4b4b4]">单色填充</label>
    <label class="flex h-[43px] items-center gap-1"><input type="radio" name="fill" class="h-[14px] w-[14px] appearance-none rounded-full border-2 border-white bg-white outline outline-[#e6e6e6] checked:border-4 checked:bg-[#b4b4b4]">渐变填充</label>
    <label class="flex h-[43px] items-center gap-1"><input type="radio" name="fill" class="h-[14px] w-[14px] appearance-none rounded-full border-2 border-white bg-white outline outline-[#e6e6e6] checked:border-4 checked:bg-[#b4b4b4]">单色渐变填充</label>
    <label class="flex h-[43px] items-center gap-1"><input type="radio" name="fill" class="h-[14px] w-[14px] appearance-none rounded-full border-2 border-white bg-white outline outline-[#e6e6e6] checked:border-4 checked:bg-[#b4b4b4]">图案填充</label>
    <label class="flex h-[43px] items-center gap-1"><input type="radio" name="fill" class="h-[14px] w-[14px] appearance-none rounded-full border-2 border-white bg-white outline outline-[#e6e6e6] checked:border-4 checked:bg-[#b4b4b4]">图片或纹理填充</label>
  </fieldset>
  <div class="mt-4 flex items-center justify-between pr-[25px] pl-[25px]"><span>颜色:</span><button aria-label="颜色" class="h-[30px] w-[75px] rounded-sm border border-[#dcdcdc] bg-white p-1"><span class="block h-full bg-[#dcdcdc]"></span></button></div>
  <div class="mt-[18px] pr-[25px] pl-[25px]">
    <label for="bright">亮度:</label>
    <div class="mt-3 flex items-center justify-between">
      <input id="bright" type="range" value="50" class="h-1 w-[177px] appearance-none rounded-full bg-[#cdcdcd] [&::-webkit-slider-thumb]:h-[14px] [&::-webkit-slider-thumb]:w-[14px] [&::-webkit-slider-thumb]:appearance-none [&::-webkit-slider-thumb]:rounded-full [&::-webkit-slider-thumb]:border-2 [&::-webkit-slider-thumb]:border-[#cdcdcd] [&::-webkit-slider-thumb]:bg-white">
      <div class="flex h-[30px] w-[75px] items-center border border-[#d8d8d8] bg-[#eee]"><input aria-label="亮度数值" value="0 %" class="w-[60px] bg-transparent pl-2 text-[15px]"><svg class="h-[22px] w-[10px]" viewBox="0 0 10 22" fill="#777"><path d="M0 7 5 1l5 6zM0 15h10l-5 6z"/></svg></div>
    </div>
  </div>
  <div class="mt-[18px] pr-[25px] pl-[25px]">
    <label for="alpha">透明度:</label>
    <div class="mt-3 flex items-center justify-between">
      <input id="alpha" type="range" value="0" class="h-1 w-[177px] appearance-none rounded-full bg-[#cdcdcd] [&::-webkit-slider-thumb]:h-[14px] [&::-webkit-slider-thumb]:w-[14px] [&::-webkit-slider-thumb]:appearance-none [&::-webkit-slider-thumb]:rounded-full [&::-webkit-slider-thumb]:border-2 [&::-webkit-slider-thumb]:border-[#cdcdcd] [&::-webkit-slider-thumb]:bg-white">
      <div class="flex h-[30px] w-[75px] items-center border border-[#d8d8d8] bg-[#eee]"><input aria-label="透明度数值" value="0 %" class="w-[60px] bg-transparent pl-2 text-[15px]"><svg class="h-[22px] w-[10px]" viewBox="0 0 10 22" fill="#777"><path d="M0 7 5 1l5 6zM0 15h10l-5 6z"/></svg></div>
    </div>
  </div>
</aside>
</main>

<!-- Status bar -->
<footer class="flex h-[38px] shrink-0 items-center border-t border-[#d4d4d4] pt-1 text-black">
  <button aria-label="页面视图" class="ml-[21px] h-5 w-7"><svg viewBox="0 0 28 20" fill="none" stroke="#555"><path d="M7 4h15v12H7z" stroke-width="3"/><path d="M1.500 2v16M26.500 2v16" stroke="#888" stroke-width="2"/></svg></button>
  <div class="ml-[30px] flex items-center"><select aria-label="页面" class="w-[117px] appearance-none bg-transparent text-[15px] text-[#333]"><option>Page-1</option></select><svg class="h-3 w-3" viewBox="0 0 12 12" fill="#777"><path d="M0 2h12L6 9z"/></svg></div>
  <div class="ml-[3px] -mt-1 h-[37px] w-px bg-[#e0e0e0]"></div>
  <button class="ml-[22px] text-[15px] font-bold">Page-1</button>
  <button aria-label="添加页面" class="ml-9 h-3 w-3"><svg viewBox="0 0 12 12" stroke="#444" stroke-width="2"><path d="M6 0v12M0 6h12"/></svg></button>
  <div class="ml-auto flex items-center pr-9">
    <button aria-label="演示" class="h-[22px] w-[22px]"><svg viewBox="0 0 22 22"><circle cx="11" cy="11" r="9.500" fill="none" stroke="#444" stroke-width="2"/><path d="m8 6 7 5-7 5z" fill="#555"/></svg></button>
    <button aria-label="缩小" class="ml-[14px] h-3 w-3"><svg viewBox="0 0 12 12" stroke="#444" stroke-width="2"><path d="M0 6h12"/></svg></button>
    <input aria-label="缩放" type="range" value="10" class="ml-[9px] h-1 w-[102px] appearance-none rounded-full bg-[#dcdcdc] [&::-webkit-slider-thumb]:h-[14px] [&::-webkit-slider-thumb]:w-[14px] [&::-webkit-slider-thumb]:appearance-none [&::-webkit-slider-thumb]:rounded-full [&::-webkit-slider-thumb]:border-2 [&::-webkit-slider-thumb]:border-[#bbb] [&::-webkit-slider-thumb]:bg-white">
    <button aria-label="放大" class="ml-[9px] h-3 w-3"><svg viewBox="0 0 12 12" stroke="#444" stroke-width="2"><path d="M6 0v12M0 6h12"/></svg></button>
    <select aria-label="缩放比例" class="ml-[18px] w-[42px] appearance-none bg-transparent text-[15px]"><option>55%</option></select>
    <svg class="h-2 w-2" viewBox="0 0 8 8" fill="#777"><path d="M1 2h6L4 6z"/></svg>
    <button aria-label="全屏" class="ml-5 h-5 w-5"><svg viewBox="0 0 20 20" fill="none" stroke="#444" stroke-width="2.200"><path d="M2 7V2h5M13 2h5v5M18 13v5h-5M7 18H2v-5"/></svg></button>
    <button aria-label="适应宽度" class="ml-[10px] h-5 w-5"><svg viewBox="0 0 20 20" fill="none" stroke="#444" stroke-width="2"><path d="M1 1.500h18v17H1z"/><path d="M5 10h10M8 7l-3 3 3 3M12 7l3 3-3 3" stroke-width="1.600"/></svg></button>
  </div>
</footer>
</div>

<script>
  const NS = 'http://www.w3.org/2000/svg';
  const STEP = 13, LENGTHS = [20, 8, 11, 8];

  function add(svg, name, attrs, text) {
    const el = document.createElementNS(NS, name);
    for (const key in attrs) el.setAttribute(key, attrs[key]);
    if (text !== undefined) el.textContent = text;
    svg.appendChild(el);
  }

  // Draws a ruler; origin is the pixel position of the zero mark, four ticks span 20 units.
  function ruler(svg, origin, vertical, from, to) {
    for (let i = from; i <= to; i++) {
      const pos = origin + i * STEP, len = LENGTHS[((i % 4) + 4) % 4];
      add(svg, 'path', {d: vertical ? `M21 ${pos}.5h${-len}` : `M${pos}.5 20v${-len}`, stroke: '#cccccc'});
      if (i % 4 === 0) {
        const label = {fill: '#6a6a6a', 'font-size': 12};
        if (vertical) Object.assign(label, {transform: `translate(13 ${pos + 2}) rotate(-90)`, 'text-anchor': 'end'});
        else Object.assign(label, {x: pos + 1, y: 11});
        add(svg, 'text', label, i * 5);
      }
    }
  }
  ruler(document.getElementById('hruler'), 199, false, -16, 79);
  ruler(document.getElementById('vruler'), 84, true, -4, 51);

  const colors = ('b50717 d7091c c84f78 e94f64 f06c6c e85f9c df9cb8 ec9187 ec919c ff9f76 efab92 f6bcb9 e6d4e9 fdd4e8 fddbe4 ' +
    '0f204b 24396f 432d7c 07468c 0067a9 4063ac 5683c5 0679cd 0688d0 2ba2e6 00b1f0 33c5f5 8cc2ec a0d9f2 cdeaf2 ' +
    '05402f 00552b 006557 57702f 007c41 209540 00ac9a 57bcc0 1ccab2 45b97c 00ab4e 82b913 a4cf62 bfd93c cfe6c9 ' +
    'e94e1b ed6a00 f08300 f39b54 f2a200 ffae00 ffb536 f8cb37 ffdb00 ffec00 fbf37b fbd36c ecca9a fddcaa fbe4cd ' +
    '7a2e79 813c80 634192 74539b 9a6ca0 9c5a8b cb7db4 a993cf c8a8cb eac2db ' +
    '57291b 743a2c 934f29 aa5424 c27b3c b5876d debb85 d3c9c4 ccd3cb ' +
    '000000 3d393a 595757 717071 888888 9f9f9f b5b5b6 cdcdcd dcdddd efefef ffffff').split(' ');
  const palette = document.getElementById('palette');
  for (const c of colors) {
    const b = document.createElement('button');
    b.className = 'h-full flex-1';
    b.style.backgroundColor = '#' + c;
    b.setAttribute('aria-label', '#' + c);
    palette.appendChild(b);
  }
</script>
</body>
</html>
